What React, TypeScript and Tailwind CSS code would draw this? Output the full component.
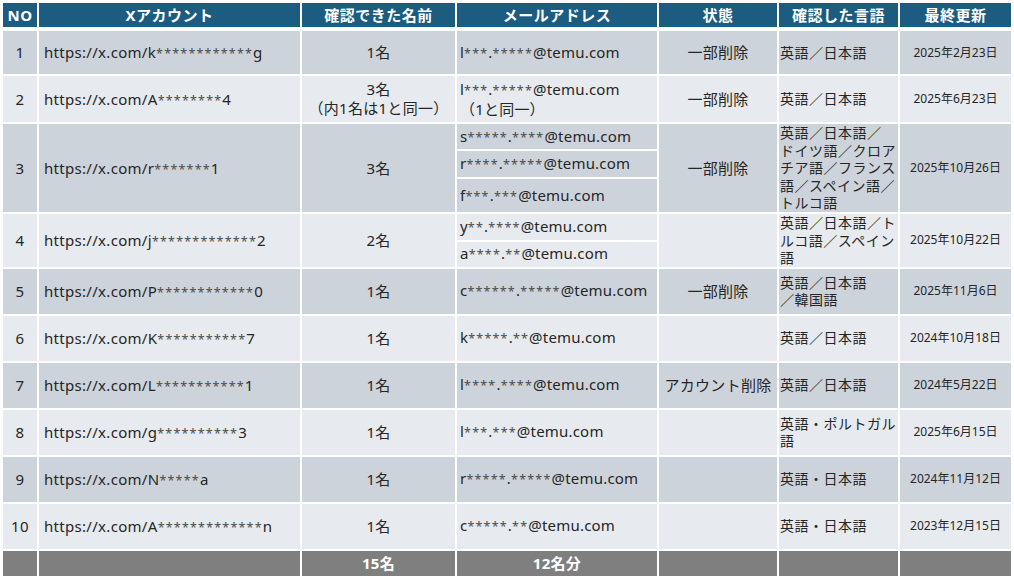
const font = { fontFamily: '"Noto Sans", "Noto Sans CJK JP", sans-serif' };

type Row = {
  no: number;
  acct: string;
  names: string[];
  emails: string[][];
  status: string;
  lang: string[];
  date: string;
};

const rows: Row[] = [
  { no: 1, acct: "https://x.com/k************g", names: ["1名"], emails: [["l***.*****@temu.com"]], status: "一部削除", lang: ["英語／日本語"], date: "2025年2月23日" },
  { no: 2, acct: "https://x.com/A********4", names: ["3名", "（内1名は1と同一）"], emails: [["l***.*****@temu.com", "（1と同一）"]], status: "一部削除", lang: ["英語／日本語"], date: "2025年6月23日" },
  { no: 3, acct: "https://x.com/r*******1", names: ["3名"], emails: [["s*****.****@temu.com"], ["r****.*****@temu.com"], ["f***.***@temu.com"]], status: "一部削除", lang: ["英語／日本語／", "ドイツ語／クロア", "チア語／フランス", "語／スペイン語／", "トルコ語"], date: "2025年10月26日" },
  { no: 4, acct: "https://x.com/j*************2", names: ["2名"], emails: [["y**.****@temu.com"], ["a****.**@temu.com"]], status: "", lang: ["英語／日本語／ト", "ルコ語／スペイン", "語"], date: "2025年10月22日" },
  { no: 5, acct: "https://x.com/P************0", names: ["1名"], emails: [["c******.*****@temu.com"]], status: "一部削除", lang: ["英語／日本語", "／韓国語"], date: "2025年11月6日" },
  { no: 6, acct: "https://x.com/K***********7", names: ["1名"], emails: [["k*****.**@temu.com"]], status: "", lang: ["英語／日本語"], date: "2024年10月18日" },
  { no: 7, acct: "https://x.com/L***********1", names: ["1名"], emails: [["l****.****@temu.com"]], status: "アカウント削除", lang: ["英語／日本語"], date: "2024年5月22日" },
  { no: 8, acct: "https://x.com/g**********3", names: ["1名"], emails: [["l***.***@temu.com"]], status: "", lang: ["英語・ポルトガル", "語"], date: "2025年6月15日" },
  { no: 9, acct: "https://x.com/N*****a", names: ["1名"], emails: [["r*****.*****@temu.com"]], status: "", lang: ["英語・日本語"], date: "2024年11月12日" },
  { no: 10, acct: "https://x.com/A*************n", names: ["1名"], emails: [["c*****.**@temu.com"]], status: "", lang: ["英語・日本語"], date: "2023年12月15日" },
];

// heights of each sub row, per data row
const heights: number[][] = [[46], [48], [27, 28, 35], [27, 26], [47], [47], [47], [47], [47], [47]];

const td = "border-2 border-white align-middle p-0";

// masked characters are drawn smaller, like in the sheet
function Masked({ text }: { text: string }) {
  const parts = text.split(/(\*+)/);
  return (
    <>
      {parts.map((p, i) =>
        p.startsWith("*") ? (
          <span key={i} className="text-[12.5px] tracking-[1.2px] text-[#4a4a4a]">{p}</span>
        ) : (
          <span key={i}>{p}</span>
        )
      )}
    </>
  );
}

function Lines({ lines, className = "", mask = false }: { lines: string[]; className?: string; mask?: boolean }) {
  return (
    <div className={className}>
      {lines.map((l, i) => (
        <div key={i} className="whitespace-nowrap">{mask ? <Masked text={l} /> : l}</div>
      ))}
    </div>
  );
}

export default function App() {
  return (
    <div className="bg-white w-[1014px] h-[585px] pt-[1px] pl-[1px]" style={font}>
      <table className="table-fixed border-collapse w-[1010px] text-[#262626] text-[15px] tracking-[0.3px]">
        <colgroup>
          <col className="w-[36px]" />
          <col className="w-[263px]" />
          <col className="w-[155px]" />
          <col className="w-[202px]" />
          <col className="w-[120px]" />
          <col className="w-[121px]" />
          <col className="w-[113px]" />
        </colgroup>
        <thead>
          <tr className="h-[27px] bg-[#1c5c80] text-white font-bold text-[15px] leading-none">
            {["NO", "Xアカウント", "確認できた名前", "メールアドレス", "状態", "確認した言語", "最終更新"].map((h) => (
              <th key={h} className="border-2 border-white border-b-[4px] text-center font-bold tracking-[0.5px]">{h}</th>
            ))}
          </tr>
        </thead>
        <tbody>
          {rows.map((r, ri) => {
            const bg = ri % 2 === 0 ? "bg-[#cdd3da]" : "bg-[#e7eaee]";
            const span = r.emails.length;
            return r.emails.map((em, si) => (
              <tr key={`${r.no}-${si}`} className={bg} style={{ height: heights[ri][si] }}>
                {si === 0 && (
                  <>
                    <td rowSpan={span} className={`${td} text-center`}>{r.no}</td>
                    <td rowSpan={span} className={`${td} pl-[5px] whitespace-nowrap`}>
                      <Masked text={r.acct} />
                    </td>
                    <td rowSpan={span} className={`${td} text-center`}>
                      <Lines lines={r.names} className="leading-[19px]" />
                    </td>
                  </>
                )}
                <td className={`${td} pl-[3px] tracking-[0.2px]`}>
                  <Lines lines={em} mask className="leading-[18px]" />
                </td>
                {si === 0 && (
                  <>
                    <td rowSpan={span} className={`${td} text-center whitespace-nowrap tracking-[0.3px]`}>{r.status}</td>
                    <td rowSpan={span} className={`${td} pl-[1px] text-[14px] tracking-[0.5px]`}>
                      <Lines lines={r.lang} className="leading-[17.5px]" />
                    </td>
                    <td rowSpan={span} className={`${td} text-center text-[12px] tracking-[0px] whitespace-nowrap`}>{r.date}</td>
                  </>
                )}
              </tr>
            ));
          })}
          <tr className="h-[27px] bg-[#7f7f7f] text-white font-bold">
            <td className={td}></td>
            <td className={td}></td>
            <td className={`${td} text-center`}>15名</td>
            <td className={`${td} text-center`}>12名分</td>
            <td className={td}></td>
            <td className={td}></td>
            <td className={td}></td>
          </tr>
        </tbody>
      </table>
    </div>
  );
}
